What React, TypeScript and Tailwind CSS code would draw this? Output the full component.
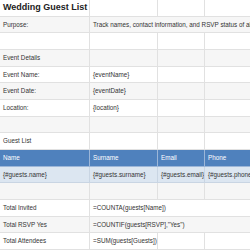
type Cell = {
  text?: string;
  span?: 1 | 2 | 3;
  kind?: "title" | "head" | "data";
};

type Row = { cells: Cell[]; tone?: "head" | "data" };

const rows: Row[] = [
  { cells: [{ text: "Wedding Guest List", kind: "title" }, {}, {}, {}] },
  {
    cells: [
      { text: "Purpose:" },
      {
        text: "Track names, contact information, and RSVP status of all invited guests.",
        span: 3,
      },
    ],
  },
  { cells: [{}, {}, {}, {}] },
  { cells: [{ text: "Event Details" }, {}, {}, {}] },
  { cells: [{ text: "Event Name:" }, { text: "{eventName}" }, {}, {}] },
  { cells: [{ text: "Event Date:" }, { text: "{eventDate}" }, {}, {}] },
  { cells: [{ text: "Location:" }, { text: "{location}" }, {}, {}] },
  { cells: [{}, {}, {}, {}] },
  { cells: [{ text: "Guest List" }, {}, {}, {}] },
  {
    tone: "head",
    cells: [
      { text: "Name" },
      { text: "Surname" },
      { text: "Email" },
      { text: "Phone" },
    ],
  },
  {
    tone: "data",
    cells: [
      { text: "{#guests.name}" },
      { text: "{#guests.surname}" },
      { text: "{#guests.email}" },
      { text: "{#guests.phone}" },
    ],
  },
  { cells: [{}, {}, {}, {}] },
  {
    cells: [
      { text: "Total Invited" },
      { text: "=COUNTA(guests[Name])", span: 3 },
    ],
  },
  {
    cells: [
      { text: "Total RSVP Yes" },
      { text: '=COUNTIF(guests[RSVP],"Yes")', span: 3 },
    ],
  },
  {
    cells: [
      { text: "Total Attendees" },
      { text: "=SUM(guests[Guests])" },
      {},
      {},
    ],
  },
];

const spanClass = { 1: "", 2: "col-span-2", 3: "col-span-3" };

export default function App() {
  return (
    <div
      className="grid h-[250px] w-[250px] grid-cols-[90px_68px_47px_60px] grid-rows-[repeat(15,16.667px)] overflow-hidden bg-white text-[6.3px] text-[#333]"
      style={{ fontFamily: '"Liberation Sans", Arial, sans-serif' }}
    >
      {rows.map((row, r) => {
        let bg = r % 2 === 1 ? "bg-[#f6f6f6]" : "bg-white";
        let border = "border-[#e1e1e1]";
        let color = "";
        if (row.tone === "head") {
          bg = "bg-[#4f81bd]";
          border = "border-[#9cb6d8]";
          color = "text-white";
        } else if (row.tone === "data") {
          bg = "bg-[#dce6f1]";
          border = "border-[#c9d5e3]";
        }
        return row.cells.map((cell, c) => (
          <div
            key={`${r}-${c}`}
            className={`flex items-center overflow-hidden whitespace-nowrap border-r border-b pl-[3px] ${bg} ${border} ${color} ${spanClass[cell.span ?? 1]}`}
          >
            {cell.kind === "title" ? (
              <span className="text-[9px] font-bold text-[#222]">
                {cell.text}
              </span>
            ) : (
              cell.text
            )}
          </div>
        ));
      })}
    </div>
  );
}
